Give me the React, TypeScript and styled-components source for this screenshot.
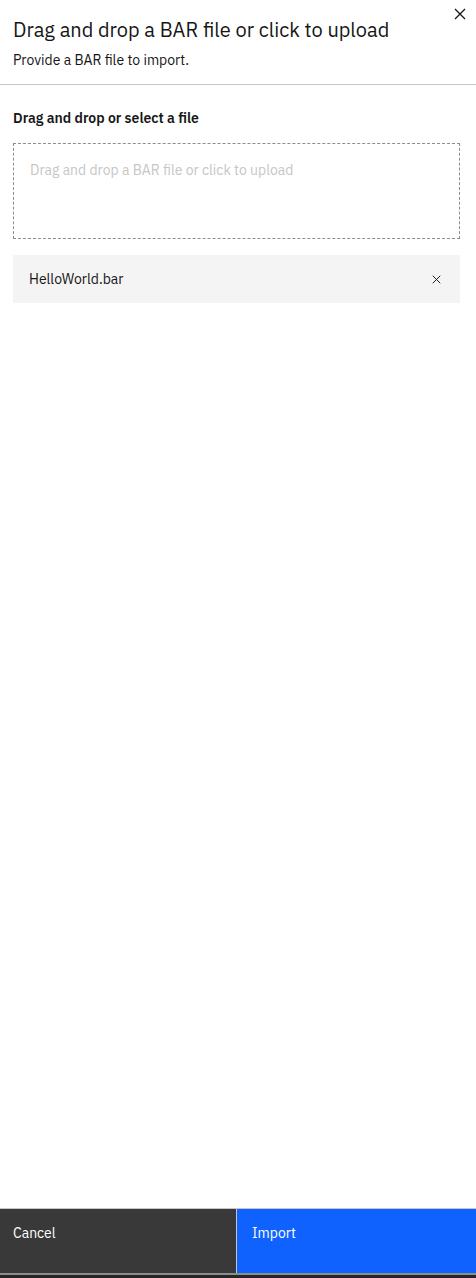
import React from "react";
import styled, { createGlobalStyle } from "styled-components";

const Global = createGlobalStyle`
  html, body { margin: 0; padding: 0; }
  body {
    font-family: "IBM Plex Sans", "Noto Sans", "Liberation Sans", sans-serif;
    background: #ffffff;
    color: #161616;
  }
  * { box-sizing: border-box; }
`;

const Modal = styled.div`
  width: 476px;
  height: 1278px;
  display: flex;
  flex-direction: column;
  background: #ffffff;
  position: relative;
`;

const Header = styled.header`
  padding: 16px 40px 14px 13px;
  border-bottom: 1px solid #c6c6c6;
`;

const Title = styled.h2`
  margin: 0;
  font-size: 20px;
  line-height: 28px;
  font-weight: 400;
  color: #161616;
`;

const Subtitle = styled.p`
  margin: 6px 0 0;
  font-size: 14px;
  line-height: 20px;
  color: #161616;
`;

const CloseButton = styled.button`
  position: absolute;
  top: 2px;
  right: 4px;
  width: 24px;
  height: 24px;
  border: 0;
  background: transparent;
  padding: 0;
  display: flex;
  align-items: center;
  justify-content: center;
  color: #161616;
`;

const Body = styled.main`
  flex: 1;
  padding: 24px 16px 0 13px;
  display: flex;
  flex-direction: column;
`;

const Label = styled.div`
  font-size: 14px;
  line-height: 18px;
  font-weight: 600;
  color: #161616;
`;

const DropZone = styled.div`
  margin-top: 16px;
  height: 96px;
  border: 1px dashed #8d8d8d;
  padding: 16px;
  font-size: 14px;
  line-height: 20px;
  color: #c6c6c6;
`;

const FileItem = styled.div`
  margin-top: 16px;
  height: 48px;
  background: #f4f4f4;
  display: flex;
  align-items: center;
  justify-content: space-between;
  padding: 0 19px 0 16px;
  font-size: 14px;
  color: #161616;
`;

const RemoveButton = styled.button`
  border: 0;
  background: transparent;
  padding: 0;
  width: 10px;
  height: 10px;
  display: flex;
  align-items: center;
  justify-content: center;
  color: #161616;
`;

const Footer = styled.footer`
  border-top: 1px solid #c6c6c6;
  display: grid;
  grid-template-columns: 236px 1px 1fr;
  height: 65px;
`;

const Divider = styled.div`
  background: #c6c6c6;
`;

const FooterButton = styled.button<{ $primary?: boolean }>`
  border: 0;
  margin: 0;
  height: 64px;
  background: ${(p) => (p.$primary ? "#0f62fe" : "#393939")};
  color: #ffffff;
  font-family: inherit;
  font-size: 14px;
  line-height: 18px;
  text-align: left;
  padding: 15px 16px 0 ${(p) => (p.$primary ? "15px" : "13px")};
  display: flex;
  align-items: flex-start;
`;

const BottomEdge = styled.div`
  height: 5px;
  border-top: 2px solid #8d8d8d;
  background: #262626;
`;

const XIcon = ({ size }: { size: number }) => (
  <svg width={size} height={size} viewBox="0 0 12 12" fill="none">
    <path d="M1 1L11 11M11 1L1 11" stroke="currentColor" strokeWidth="1.3" />
  </svg>
);

export default function App() {
  return (
    <>
      <Global />
      <Modal>
        <Header>
          <Title>Drag and drop a BAR file or click to upload</Title>
          <Subtitle>Provide a BAR file to import.</Subtitle>
        </Header>
        <CloseButton aria-label="Close">
          <XIcon size={12} />
        </CloseButton>
        <Body>
          <Label>Drag and drop or select a file</Label>
          <DropZone>Drag and drop a BAR file or click to upload</DropZone>
          <FileItem>
            <span>HelloWorld.bar</span>
            <RemoveButton aria-label="Remove file">
              <XIcon size={9} />
            </RemoveButton>
          </FileItem>
        </Body>
        <Footer>
          <FooterButton>Cancel</FooterButton>
          <Divider />
          <FooterButton $primary>Import</FooterButton>
        </Footer>
        <BottomEdge />
      </Modal>
    </>
  );
}
